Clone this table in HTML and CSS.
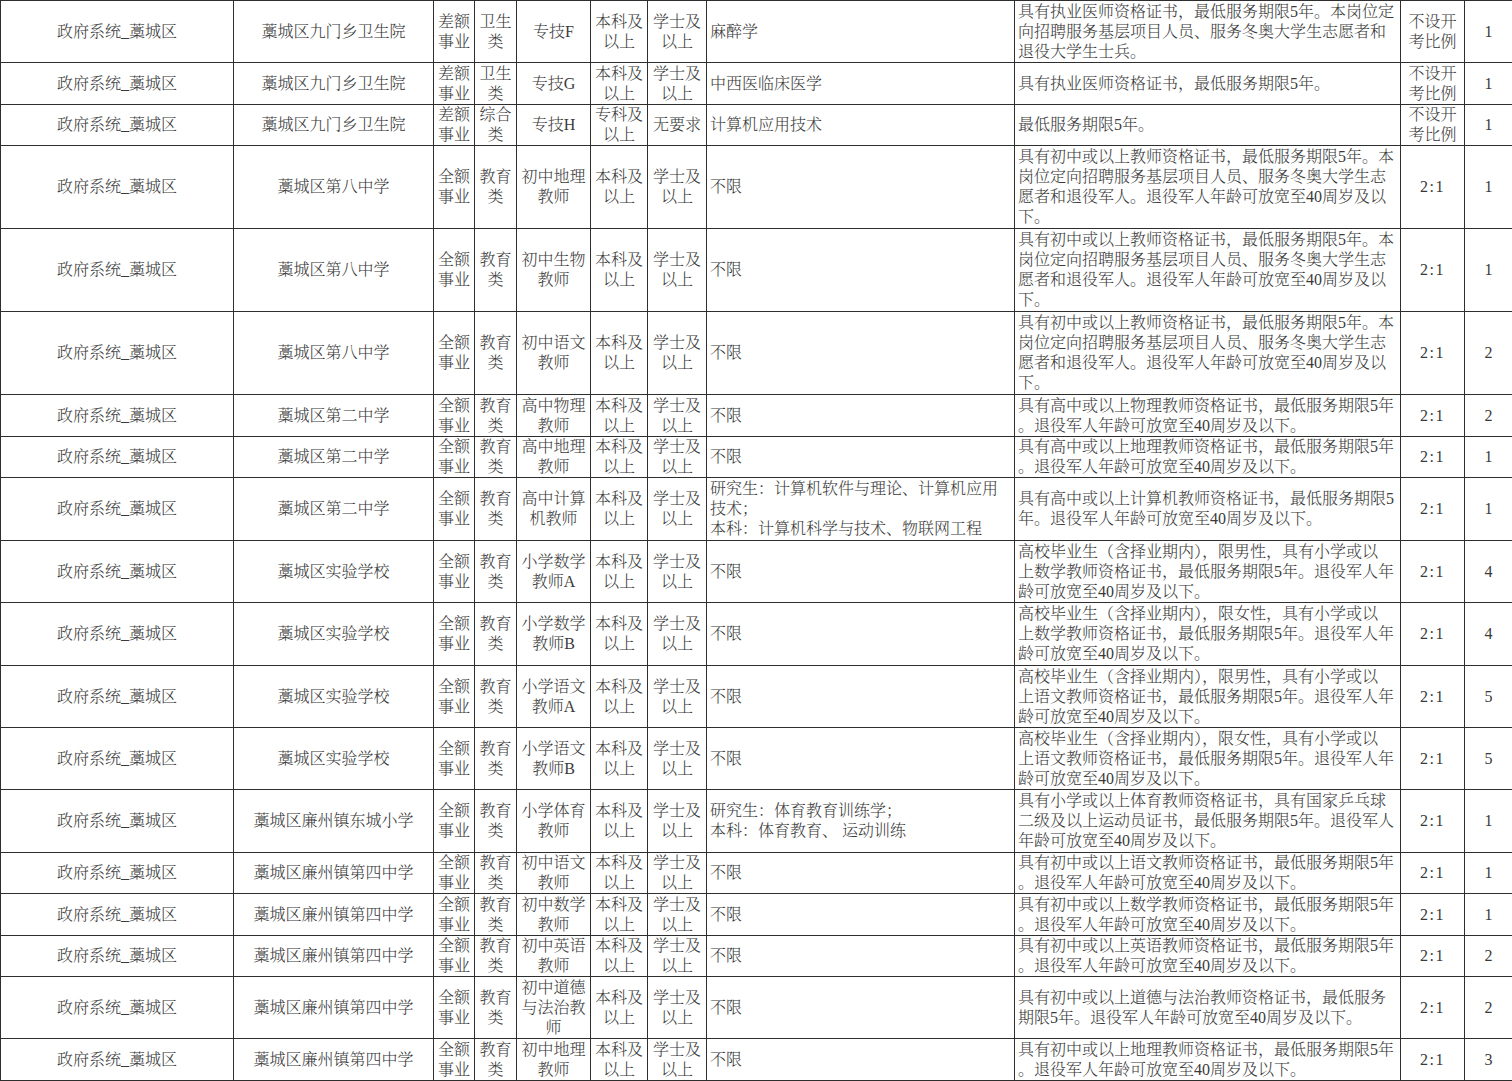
FILE: index.html
```html
<!DOCTYPE html>
<html lang="zh-CN">
<head>
<meta charset="utf-8">
<title>岗位表</title>
<link rel="stylesheet" href="styles.css">
</head>
<body>
<table class="grid">
<colgroup>
<col class="c1"><col class="c2"><col class="c3"><col class="c4"><col class="c5"><col class="c6"><col class="c7"><col class="c8"><col class="c9"><col class="c10"><col class="c11">
</colgroup>
<tbody>
<tr class="h62">
<td>政府系统_藁城区</td><td>藁城区九门乡卫生院</td><td>差额<br>事业</td><td>卫生<br>类</td><td>专技F</td><td>本科及<br>以上</td><td>学士及<br>以上</td>
<td class="l">麻醉学</td>
<td class="l">具有执业医师资格证书，最低服务期限5年。本岗位定<br>向招聘服务基层项目人员、服务冬奥大学生志愿者和<br>退役大学生士兵。</td>
<td>不设开<br>考比例</td><td>1</td>
</tr>
<tr class="h42">
<td>政府系统_藁城区</td><td>藁城区九门乡卫生院</td><td>差额<br>事业</td><td>卫生<br>类</td><td>专技G</td><td>本科及<br>以上</td><td>学士及<br>以上</td>
<td class="l">中西医临床医学</td>
<td class="l">具有执业医师资格证书，最低服务期限5年。</td>
<td>不设开<br>考比例</td><td>1</td>
</tr>
<tr class="h41">
<td>政府系统_藁城区</td><td>藁城区九门乡卫生院</td><td>差额<br>事业</td><td>综合<br>类</td><td>专技H</td><td>专科及<br>以上</td><td>无要求</td>
<td class="l">计算机应用技术</td>
<td class="l">最低服务期限5年。</td>
<td>不设开<br>考比例</td><td>1</td>
</tr>
<tr class="h83">
<td>政府系统_藁城区</td><td>藁城区第八中学</td><td>全额<br>事业</td><td>教育<br>类</td><td>初中地理<br>教师</td><td>本科及<br>以上</td><td>学士及<br>以上</td>
<td class="l">不限</td>
<td class="l">具有初中或以上教师资格证书，最低服务期限5年。本<br>岗位定向招聘服务基层项目人员、服务冬奥大学生志<br>愿者和退役军人。退役军人年龄可放宽至40周岁及以<br>下。</td>
<td class="ratio">2:1</td><td>1</td>
</tr>
<tr class="h83">
<td>政府系统_藁城区</td><td>藁城区第八中学</td><td>全额<br>事业</td><td>教育<br>类</td><td>初中生物<br>教师</td><td>本科及<br>以上</td><td>学士及<br>以上</td>
<td class="l">不限</td>
<td class="l">具有初中或以上教师资格证书，最低服务期限5年。本<br>岗位定向招聘服务基层项目人员、服务冬奥大学生志<br>愿者和退役军人。退役军人年龄可放宽至40周岁及以<br>下。</td>
<td class="ratio">2:1</td><td>1</td>
</tr>
<tr class="h83">
<td>政府系统_藁城区</td><td>藁城区第八中学</td><td>全额<br>事业</td><td>教育<br>类</td><td>初中语文<br>教师</td><td>本科及<br>以上</td><td>学士及<br>以上</td>
<td class="l">不限</td>
<td class="l">具有初中或以上教师资格证书，最低服务期限5年。本<br>岗位定向招聘服务基层项目人员、服务冬奥大学生志<br>愿者和退役军人。退役军人年龄可放宽至40周岁及以<br>下。</td>
<td class="ratio">2:1</td><td>2</td>
</tr>
<tr class="h42">
<td>政府系统_藁城区</td><td>藁城区第二中学</td><td>全额<br>事业</td><td>教育<br>类</td><td>高中物理<br>教师</td><td>本科及<br>以上</td><td>学士及<br>以上</td>
<td class="l">不限</td>
<td class="l">具有高中或以上物理教师资格证书，最低服务期限5年<br>。退役军人年龄可放宽至40周岁及以下。</td>
<td class="ratio">2:1</td><td>2</td>
</tr>
<tr class="h41">
<td>政府系统_藁城区</td><td>藁城区第二中学</td><td>全额<br>事业</td><td>教育<br>类</td><td>高中地理<br>教师</td><td>本科及<br>以上</td><td>学士及<br>以上</td>
<td class="l">不限</td>
<td class="l">具有高中或以上地理教师资格证书，最低服务期限5年<br>。退役军人年龄可放宽至40周岁及以下。</td>
<td class="ratio">2:1</td><td>1</td>
</tr>
<tr class="h63">
<td>政府系统_藁城区</td><td>藁城区第二中学</td><td>全额<br>事业</td><td>教育<br>类</td><td>高中计算<br>机教师</td><td>本科及<br>以上</td><td>学士及<br>以上</td>
<td class="l">研究生：计算机软件与理论、计算机应用<br>技术；<br>本科：计算机科学与技术、物联网工程</td>
<td class="l">具有高中或以上计算机教师资格证书，最低服务期限5<br>年。退役军人年龄可放宽至40周岁及以下。</td>
<td class="ratio">2:1</td><td>1</td>
</tr>
<tr class="h62">
<td>政府系统_藁城区</td><td>藁城区实验学校</td><td>全额<br>事业</td><td>教育<br>类</td><td>小学数学<br>教师A</td><td>本科及<br>以上</td><td>学士及<br>以上</td>
<td class="l">不限</td>
<td class="l">高校毕业生（含择业期内），限男性，具有小学或以<br>上数学教师资格证书，最低服务期限5年。退役军人年<br>龄可放宽至40周岁及以下。</td>
<td class="ratio">2:1</td><td>4</td>
</tr>
<tr class="h63">
<td>政府系统_藁城区</td><td>藁城区实验学校</td><td>全额<br>事业</td><td>教育<br>类</td><td>小学数学<br>教师B</td><td>本科及<br>以上</td><td>学士及<br>以上</td>
<td class="l">不限</td>
<td class="l">高校毕业生（含择业期内），限女性，具有小学或以<br>上数学教师资格证书，最低服务期限5年。退役军人年<br>龄可放宽至40周岁及以下。</td>
<td class="ratio">2:1</td><td>4</td>
</tr>
<tr class="h62">
<td>政府系统_藁城区</td><td>藁城区实验学校</td><td>全额<br>事业</td><td>教育<br>类</td><td>小学语文<br>教师A</td><td>本科及<br>以上</td><td>学士及<br>以上</td>
<td class="l">不限</td>
<td class="l">高校毕业生（含择业期内），限男性，具有小学或以<br>上语文教师资格证书，最低服务期限5年。退役军人年<br>龄可放宽至40周岁及以下。</td>
<td class="ratio">2:1</td><td>5</td>
</tr>
<tr class="h62">
<td>政府系统_藁城区</td><td>藁城区实验学校</td><td>全额<br>事业</td><td>教育<br>类</td><td>小学语文<br>教师B</td><td>本科及<br>以上</td><td>学士及<br>以上</td>
<td class="l">不限</td>
<td class="l">高校毕业生（含择业期内），限女性，具有小学或以<br>上语文教师资格证书，最低服务期限5年。退役军人年<br>龄可放宽至40周岁及以下。</td>
<td class="ratio">2:1</td><td>5</td>
</tr>
<tr class="h63">
<td>政府系统_藁城区</td><td>藁城区廉州镇东城小学</td><td>全额<br>事业</td><td>教育<br>类</td><td>小学体育<br>教师</td><td>本科及<br>以上</td><td>学士及<br>以上</td>
<td class="l">研究生：体育教育训练学；<br>本科：体育教育、 运动训练</td>
<td class="l">具有小学或以上体育教师资格证书，具有国家乒乓球<br>二级及以上运动员证书，最低服务期限5年。退役军人<br>年龄可放宽至40周岁及以下。</td>
<td class="ratio">2:1</td><td>1</td>
</tr>
<tr class="h41">
<td>政府系统_藁城区</td><td>藁城区廉州镇第四中学</td><td>全额<br>事业</td><td>教育<br>类</td><td>初中语文<br>教师</td><td>本科及<br>以上</td><td>学士及<br>以上</td>
<td class="l">不限</td>
<td class="l">具有初中或以上语文教师资格证书，最低服务期限5年<br>。退役军人年龄可放宽至40周岁及以下。</td>
<td class="ratio">2:1</td><td>1</td>
</tr>
<tr class="h42">
<td>政府系统_藁城区</td><td>藁城区廉州镇第四中学</td><td>全额<br>事业</td><td>教育<br>类</td><td>初中数学<br>教师</td><td>本科及<br>以上</td><td>学士及<br>以上</td>
<td class="l">不限</td>
<td class="l">具有初中或以上数学教师资格证书，最低服务期限5年<br>。退役军人年龄可放宽至40周岁及以下。</td>
<td class="ratio">2:1</td><td>1</td>
</tr>
<tr class="h41">
<td>政府系统_藁城区</td><td>藁城区廉州镇第四中学</td><td>全额<br>事业</td><td>教育<br>类</td><td>初中英语<br>教师</td><td>本科及<br>以上</td><td>学士及<br>以上</td>
<td class="l">不限</td>
<td class="l">具有初中或以上英语教师资格证书，最低服务期限5年<br>。退役军人年龄可放宽至40周岁及以下。</td>
<td class="ratio">2:1</td><td>2</td>
</tr>
<tr class="h62">
<td>政府系统_藁城区</td><td>藁城区廉州镇第四中学</td><td>全额<br>事业</td><td>教育<br>类</td><td>初中道德<br>与法治教<br>师</td><td>本科及<br>以上</td><td>学士及<br>以上</td>
<td class="l">不限</td>
<td class="l">具有初中或以上道德与法治教师资格证书，最低服务<br>期限5年。退役军人年龄可放宽至40周岁及以下。</td>
<td class="ratio">2:1</td><td>2</td>
</tr>
<tr class="h42">
<td>政府系统_藁城区</td><td>藁城区廉州镇第四中学</td><td>全额<br>事业</td><td>教育<br>类</td><td>初中地理<br>教师</td><td>本科及<br>以上</td><td>学士及<br>以上</td>
<td class="l">不限</td>
<td class="l">具有初中或以上地理教师资格证书，最低服务期限5年<br>。退役军人年龄可放宽至40周岁及以下。</td>
<td class="ratio">2:1</td><td>3</td>
</tr>
</tbody>
</table>
</body>
</html>
```
FILE: styles.css
```css
html, body {
  margin: 0;
  padding: 0;
  background: #ffffff;
  overflow: hidden;
}

.grid {
  border-collapse: collapse;
  table-layout: fixed;
  width: 1512px;
  font-family: "Liberation Serif", "Noto Serif CJK SC", "Noto Sans CJK SC", serif;
  font-size: 16px;
  font-weight: 300;
  line-height: 20px;
  color: #3a3a3a;
}

.c1 { width: 233px; }
.c2 { width: 200px; }
.c3 { width: 41px; }
.c4 { width: 42px; }
.c5 { width: 74px; }
.c6 { width: 57px; }
.c7 { width: 59px; }
.c8 { width: 308px; }
.c9 { width: 386px; }
.c10 { width: 64px; }
.c11 { width: 48px; }

.grid td {
  border: 1px solid #2e2e2e;
  padding: 0;
  text-align: center;
  vertical-align: middle;
  white-space: nowrap;
  overflow: hidden;
}

.grid td.l {
  text-align: left;
  padding-left: 3px;
}

.grid td.ratio {
  letter-spacing: 1.5px;
}

.h41 { height: 41px; }
.h42 { height: 42px; }
.h62 { height: 62px; }
.h63 { height: 63px; }
.h83 { height: 83px; }
```
